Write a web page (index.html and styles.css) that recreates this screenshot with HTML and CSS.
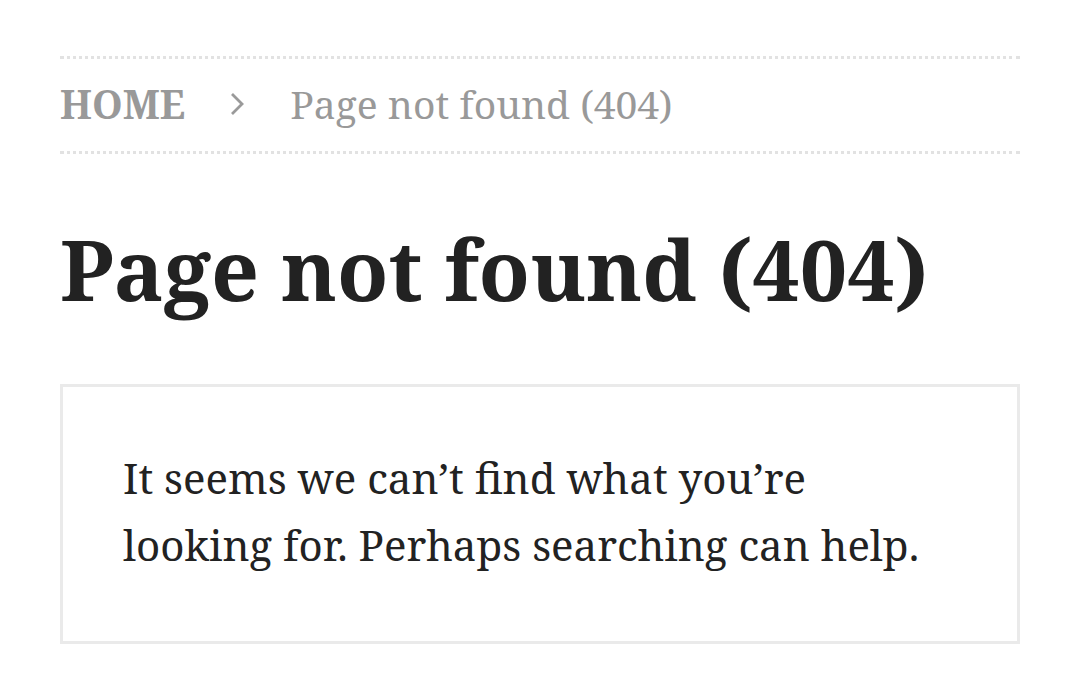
FILE: index.html
```html
<!DOCTYPE html>
<html lang="en">
<head>
    <meta charset="UTF-8">
    <meta name="viewport" content="width=device-width, initial-scale=1.0">
    <title>Page not found (404)</title>
    <link rel="stylesheet" href="styles.css">
</head>
<body>
    <div class="page">
        <nav class="breadcrumb">
            <a href="/" class="crumb-home">HOME</a>
            <span class="crumb-sep">
                <svg width="14" height="22" viewBox="0 0 14 22"><path d="M2 1 L12 11 L2 21" fill="none" stroke="#9a9a9a" stroke-width="2.8"/></svg>
            </span>
            <span class="crumb-current">Page not found (404)</span>
        </nav>

        <h1 class="page-title">Page not found (404)</h1>

        <div class="notice">
            <p>It seems we can’t find what you’re looking for. Perhaps searching can help.</p>
        </div>
    </div>
</body>
</html>
```

FILE: styles.css
```css
body {
    margin: 0;
    background: #ffffff;
    font-family: "Noto Serif", "DejaVu Serif", serif;
    color: #222222;
}

.page {
    padding: 56px 60px 0;
}

.breadcrumb {
    display: flex;
    align-items: center;
    height: 88px;
    padding-bottom: 4px;
    border-top: 3px dotted #e2e2e2;
    border-bottom: 3px dotted #e2e2e2;
    font-size: 39px;
    color: #999999;
}

.crumb-home {
    font-weight: bold;
    color: #999999;
    text-decoration: none;
}

.crumb-sep {
    display: flex;
    margin: 2px 46px 0 45px;
}

.page-title {
    margin: 65px 0 0;
    font-size: 84px;
    line-height: 1.2;
    color: #222222;
}

.notice {
    margin-top: 64px;
    border: 3px solid #eaeaea;
    padding: 57px 60px 63px;
}

.notice p {
    margin: 0;
    font-size: 42px;
    line-height: 67px;
    color: #222222;
}
```
